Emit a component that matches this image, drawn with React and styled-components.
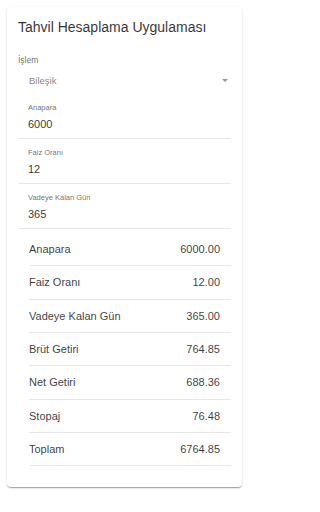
import React from "react";
import styled, { createGlobalStyle } from "styled-components";

const Global = createGlobalStyle`
  html, body { margin: 0; padding: 0; background: #fff; }
  body { font-family: "Liberation Sans", Arial, sans-serif; }
  * { box-sizing: border-box; }
`;

const Page = styled.div`
  padding: 7px;
`;

const Card = styled.div`
  width: 235px;
  background: #fff;
  border-radius: 4px;
  box-shadow: 0px 2px 1px -1px rgba(0,0,0,0.2), 0px 1px 1px 0px rgba(0,0,0,0.14), 0px 1px 3px 0px rgba(0,0,0,0.12);
  padding: 10px 11px 21px 11px;
  display: flex;
  flex-direction: column;
`;

const Title = styled.div`
  font-size: 14px;
  line-height: 20px;
  color: rgba(0,0,0,0.82);
`;

const SelectLabel = styled.div`
  margin-top: 17px;
  font-size: 8.5px;
  line-height: 12px;
  color: rgba(0,0,0,0.6);
`;

const SelectRow = styled.div`
  margin-top: 4px;
  height: 20px;
  display: flex;
  align-items: center;
  justify-content: space-between;
  padding: 0 3px 0 11px;
  font-size: 9.5px;
  color: rgba(0,0,0,0.5);
`;

const Arrow = styled.span`
  width: 0;
  height: 0;
  border-left: 3.5px solid transparent;
  border-right: 3.5px solid transparent;
  border-top: 3.5px solid rgba(0,0,0,0.4);
`;

const Field = styled.div`
  margin-top: ${(p) => p.$gap}px;
  padding: 0 0 7px 10px;
  border-bottom: 1px solid #e8e8e8;
  display: flex;
  flex-direction: column;
`;

const FieldLabel = styled.div`
  font-size: 7.5px;
  line-height: 10px;
  color: rgba(0,0,0,0.6);
`;

const FieldValue = styled.div`
  margin-top: 4px;
  font-size: 11px;
  line-height: 14px;
  color: rgba(0,0,0,0.82);
`;

const Table = styled.div`
  margin: 4px 0 0 11px;
  display: flex;
  flex-direction: column;
`;

const Row = styled.div`
  height: 33.33px;
  display: flex;
  align-items: center;
  justify-content: space-between;
  padding-right: 11px;
  border-bottom: 1px solid #e8e8e8;
  font-size: 11px;
  color: rgba(0,0,0,0.78);
`;

const fields = [
  { label: "Anapara", value: "6000", gap: 13 },
  { label: "Faiz Oranı", value: "12", gap: 9 },
  { label: "Vadeye Kalan Gün", value: "365", gap: 9 },
];

const rows = [
  ["Anapara", "6000.00"],
  ["Faiz Oranı", "12.00"],
  ["Vadeye Kalan Gün", "365.00"],
  ["Brüt Getiri", "764.85"],
  ["Net Getiri", "688.36"],
  ["Stopaj", "76.48"],
  ["Toplam", "6764.85"],
];

export default function App() {
  return (
    <Page>
      <Global />
      <Card>
        <Title>Tahvil Hesaplama Uygulaması</Title>
        <SelectLabel>İşlem</SelectLabel>
        <SelectRow>
          <span>Bileşik</span>
          <Arrow />
        </SelectRow>
        {fields.map((f) => (
          <Field key={f.label} $gap={f.gap}>
            <FieldLabel>{f.label}</FieldLabel>
            <FieldValue>{f.value}</FieldValue>
          </Field>
        ))}
        <Table>
          {rows.map(([k, v]) => (
            <Row key={k}>
              <span>{k}</span>
              <span>{v}</span>
            </Row>
          ))}
        </Table>
      </Card>
    </Page>
  );
}
